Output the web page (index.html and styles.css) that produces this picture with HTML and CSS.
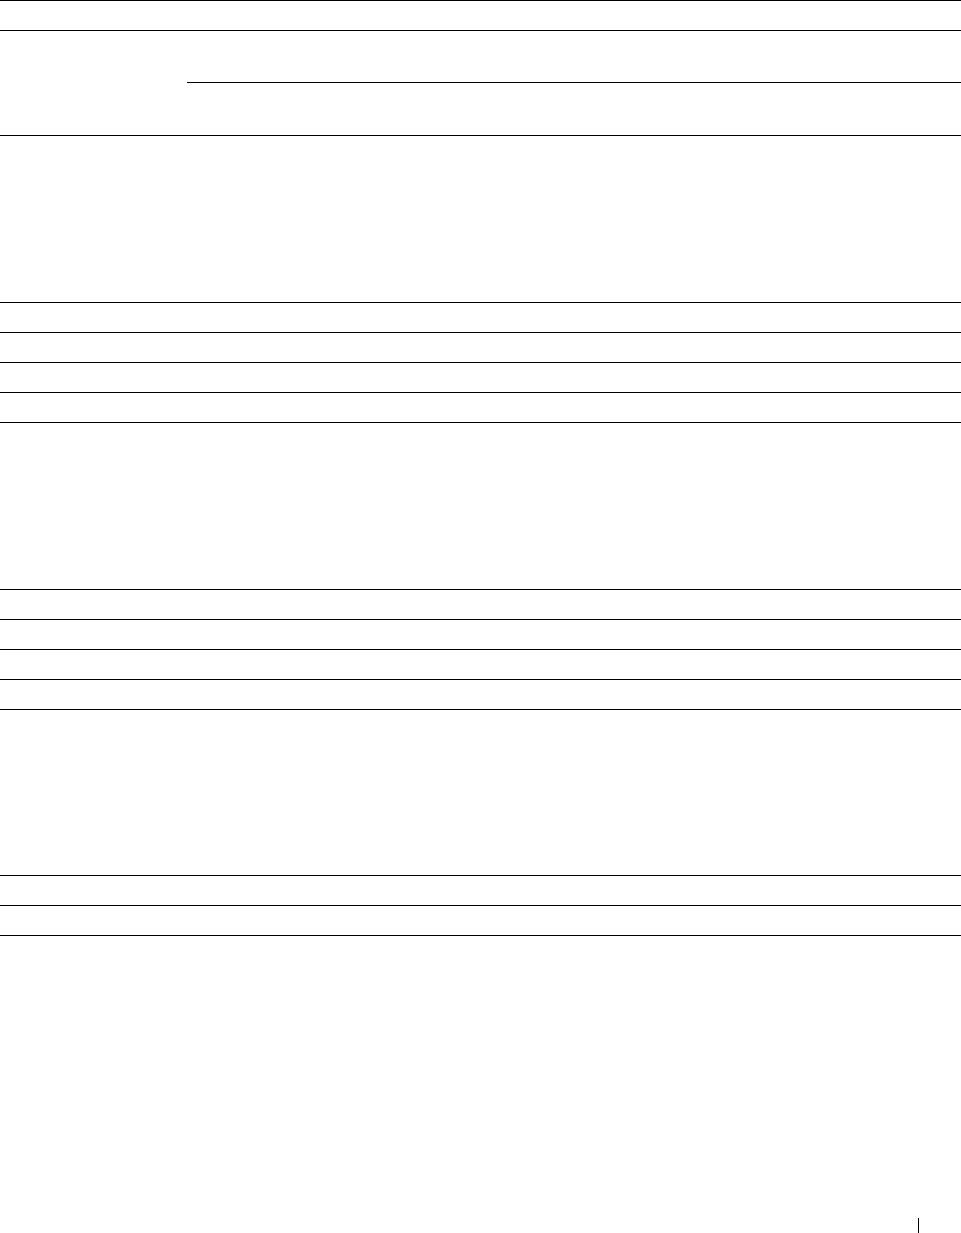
FILE: index.html
```html
<!DOCTYPE html>
<html lang="en">
<head>
<meta charset="utf-8">
<title>Table page</title>
<link rel="stylesheet" href="styles.css">
</head>
<body>
<div class="page">
  <div class="table">
    <div class="row h30"></div>
    <div class="row group">
      <div class="cell-left"></div>
      <div class="cell-right">
        <div class="sub sub-top"></div>
        <div class="sub sub-bottom"></div>
      </div>
    </div>
    <div class="row h167"></div>
    <div class="row h30"></div>
    <div class="row h30"></div>
    <div class="row h30"></div>
    <div class="row h30"></div>
    <div class="row h167"></div>
    <div class="row h30"></div>
    <div class="row h30"></div>
    <div class="row h30"></div>
    <div class="row h30"></div>
    <div class="row h166"></div>
    <div class="row h30"></div>
    <div class="row h30"></div>
    <div class="row end"></div>
  </div>
  <div class="footer">
    <span class="page-mark"></span>
  </div>
</div>
</body>
</html>
```

FILE: styles.css
```css
html, body {
  margin: 0;
  padding: 0;
  background: #fff;
  font-family: "Liberation Serif", serif;
}

.page {
  display: flex;
  flex-direction: column;
  height: 1233px;
  overflow: hidden;
}

.table {
  display: flex;
  flex-direction: column;
}

.row {
  box-sizing: border-box;
  border-top: 1px solid #000;
}

.h30 { height: 30px; }
.h166 { height: 166px; }
.h167 { height: 167px; }
.end { height: 1px; }

.group {
  display: flex;
  height: 105px;
}

.cell-left {
  width: 187px;
  flex: none;
}

.cell-right {
  flex: 1;
  display: flex;
  flex-direction: column;
}

.sub {
  box-sizing: border-box;
}

.sub-top { height: 51px; }

.sub-bottom {
  height: 53px;
  border-top: 1px solid #000;
}

.footer {
  margin-top: auto;
  display: flex;
  justify-content: flex-end;
  padding-right: 42px;
}

.page-mark {
  display: block;
  width: 0;
  height: 15px;
  border-left: 1px solid #000;
}
```
